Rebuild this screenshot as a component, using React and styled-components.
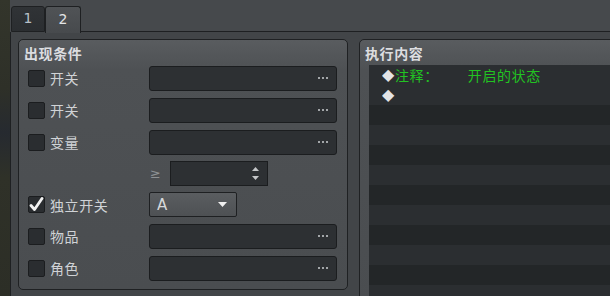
import React from 'react';
import styled, {createGlobalStyle} from 'styled-components';

const Global=createGlobalStyle`
  html,body{
    margin:0;
    padding:0;
    width:610px;
    height:296px;
    overflow:hidden;
    background:#45484b;
  }
  #root{height:100%;}
`;

const Window=styled.div`
  display:flex;
  width:610px;
  height:296px;
  overflow:hidden;
  font-family:"Noto Sans CJK SC","Noto Sans",sans-serif;
  color:#d0d3d6;
`;

const SideStrip=styled.div`
  width:10px;
  flex-shrink:0;
  background:linear-gradient(180deg,#33352b 0%,#2e3028 30%,#262a30 45%,#2f3128 60%,#2c2e26 100%);
`;

const Main=styled.div`
  flex:1;
  display:flex;
  flex-direction:column;
  min-width:0;
`;

const TabBar=styled.div`
  height:32px;
  display:flex;
  align-items:flex-end;
  background:#46494c;
  padding-left:1px;
  box-sizing:border-box;
`;

const Tab=styled.div`
  box-sizing:border-box;
  width:${({$w})=>$w}px;
  height:${({$active})=>$active?27:26}px;
  margin-bottom:${({$active})=>$active?-1:0}px;
  display:flex;
  align-items:center;
  justify-content:center;
  border:1px solid #1e2022;
  border-bottom:${({$active})=>$active?'none':'1px solid #1e2022'};
  border-radius:3px 3px 0 0;
  background:${({$active})=>$active
    ?'linear-gradient(180deg,#505356 0%,#474a4d 100%)'
    :'linear-gradient(180deg,#303336 0%,#2b2e31 100%)'};
  color:${({$active})=>$active?'#e2e4e6':'#b8c0c8'};
  font-family:"DejaVu Sans",sans-serif;
  font-size:14px;
  padding-bottom:2px;
  position:relative;
  z-index:1;
`;

const TabFill=styled.div`
  flex:1;
  height:1px;
  background:#1e2022;
`;

const Pane=styled.div`
  flex:1;
  display:flex;
  align-items:flex-start;
  gap:11px;
  padding:7px 0 0 7px;
  background:#424548;
  border-left:1px solid #1e2022;
  overflow:hidden;
`;

const GroupBox=styled.div`
  box-sizing:border-box;
  width:${({$w})=>$w}px;
  flex-shrink:0;
  border:1px solid #1f2123;
  border-radius:5px;
  background:linear-gradient(180deg,#595c5f 0px,#4e5154 30px,#4a4d50 100%);
  padding:${({$pad})=>$pad};
  display:flex;
  flex-direction:column;
`;

const GroupTitle=styled.div`
  height:20px;
  line-height:20px;
  font-size:14px;
  font-weight:700;
  letter-spacing:0.6px;
  color:#dcdde0;
  margin-left:-4px;
  margin-bottom:${({$mb})=>$mb}px;
`;

const Row=styled.div`
  display:flex;
  align-items:center;
  height:${({$h})=>$h||24}px;
  margin-top:${({$mt})=>$mt||0}px;
`;

const Lead=styled.div`
  width:121px;
  flex-shrink:0;
  display:flex;
  align-items:center;
`;

const CheckBox=styled.div`
  box-sizing:border-box;
  width:17px;
  height:17px;
  border:1px solid #1b1d1f;
  border-radius:2px;
  background:#2a2d30;
  display:flex;
  align-items:center;
  justify-content:center;
`;

const Label=styled.span`
  margin-left:5px;
  font-size:14px;
  letter-spacing:0.6px;
  color:#d0d3d6;
`;

const Field=styled.div`
  box-sizing:border-box;
  width:188px;
  height:25px;
  border:1px solid #1b1d1f;
  border-radius:3px;
  background:#2d3033;
  display:flex;
  align-items:center;
  justify-content:flex-end;
  padding-right:6px;
`;

const Ge=styled.span`
  width:20px;
  font-family:"DejaVu Sans",sans-serif;
  font-size:13px;
  color:#8e9194;
  padding-left:1px;
`;

const SpinBox=styled.div`
  box-sizing:border-box;
  width:98px;
  height:25px;
  border:1px solid #1b1d1f;
  background:#2d3033;
  display:flex;
  flex-direction:column;
  align-items:flex-end;
  justify-content:center;
  gap:5px;
  padding-right:8px;
`;

const Combo=styled.div`
  box-sizing:border-box;
  width:88px;
  height:25px;
  border:1px solid #1e2022;
  border-radius:2px;
  background:linear-gradient(180deg,#5a5d60 0%,#4e5154 100%);
  display:flex;
  align-items:center;
  justify-content:space-between;
  padding:0 9px 0 7px;
  font-family:"DejaVu Sans",sans-serif;
  font-size:15px;
  color:#d6d8da;
`;

const EventList=styled.div`
  display:flex;
  flex-direction:column;
`;

const ListRow=styled.div`
  height:20px;
  display:flex;
  align-items:center;
  padding-left:13px;
  background:${({$dark})=>$dark?'#232628':'#2b2e31'};
  font-size:14px;
  letter-spacing:0.6px;
  color:#22c322;
  white-space:nowrap;
`;

const Diamond=styled.span`
  display:inline-block;
  font-family:"DejaVu Sans",sans-serif;
  font-size:16px;
  line-height:20px;
  color:#e2e4e6;
  width:13px;
  overflow:hidden;
  letter-spacing:0;
`;

const Gap=styled.span`
  margin-left:${({$w})=>$w}px;
`;

const Dots=()=>(
  <svg width="12" height="3" viewBox="0 0 12 3">
    <rect x="0" y="0" width="2" height="2" fill="#a3a6a9"/>
    <rect x="4" y="0" width="2" height="2" fill="#a3a6a9"/>
    <rect x="8" y="0" width="2" height="2" fill="#a3a6a9"/>
  </svg>
);

const Check=()=>(
  <svg width="15" height="15" viewBox="0 0 15 15" style={{marginTop:-1}}>
    <path d="M2 8.5 L5.5 12.5 L13 1.5" stroke="#f2f2f2" strokeWidth="2.8" fill="none" strokeLinecap="round" strokeLinejoin="round"/>
  </svg>
);

const Tri=({down,w=7,h=4,color="#c4c6c8"})=>(
  <svg width={w} height={h} viewBox={`0 0 ${w} ${h}`}>
    <path d={down?`M0 0 L${w} 0 L${w/2} ${h} Z`:`M0 ${h} L${w} ${h} L${w/2} 0 Z`} fill={color}/>
  </svg>
);

const conditions=[
  {label:'开关',type:'field'},
  {label:'开关',type:'field'},
  {label:'变量',type:'field'},
  {type:'spin',mt:7,h:25},
  {label:'独立开关',type:'combo',checked:true,mt:6,h:25},
  {label:'物品',type:'field',mt:7},
  {label:'角色',type:'field',mt:8},
];

const App=()=>{
  const rows=Array.from({length:12},(_,i)=>i);
  return (
    <>
    <Global/>
    <Window>
      <SideStrip/>
      <Main>
        <TabBar>
          <Tab $w={34}>1</Tab>
          <Tab $w={36} $active>2</Tab>
          <TabFill/>
        </TabBar>
        <Pane>
          <GroupBox $w={330} $pad="3px 10px 9px 9px">
            <GroupTitle $mb={3}>出现条件</GroupTitle>
            {conditions.map((c,i)=>(
              <Row key={i} $mt={i===0?0:(c.mt||8)} $h={c.h}>
                <Lead>
                  {c.label&&(
                    <>
                      <CheckBox>{c.checked&&<Check/>}</CheckBox>
                      <Label>{c.label}</Label>
                    </>
                  )}
                </Lead>
                {c.type==='field'&&<Field><Dots/></Field>}
                {c.type==='spin'&&(
                  <>
                    <Ge>≥</Ge>
                    <SpinBox>
                      <Tri/>
                      <Tri down/>
                    </SpinBox>
                  </>
                )}
                {c.type==='combo'&&(
                  <Combo>
                    <span>A</span>
                    <Tri down w={9} h={5} color="#f0f0f0"/>
                  </Combo>
                )}
              </Row>
            ))}
          </GroupBox>
          <GroupBox $w={300} $pad="3px 9px 0 9px">
            <GroupTitle $mb={2}>执行内容</GroupTitle>
            <EventList>
              {rows.map((i)=>(
                <ListRow key={i} $dark={i>=2&&i%2===0}>
                  {i===0&&(
                    <>
                      <Diamond>◆</Diamond>
                      <span>注释：</span>
                      <Gap $w={29}>开启的状态</Gap>
                    </>
                  )}
                  {i===1&&<Diamond>◆</Diamond>}
                </ListRow>
              ))}
            </EventList>
          </GroupBox>
        </Pane>
      </Main>
    </Window>
    </>
  );
};

export default App;
